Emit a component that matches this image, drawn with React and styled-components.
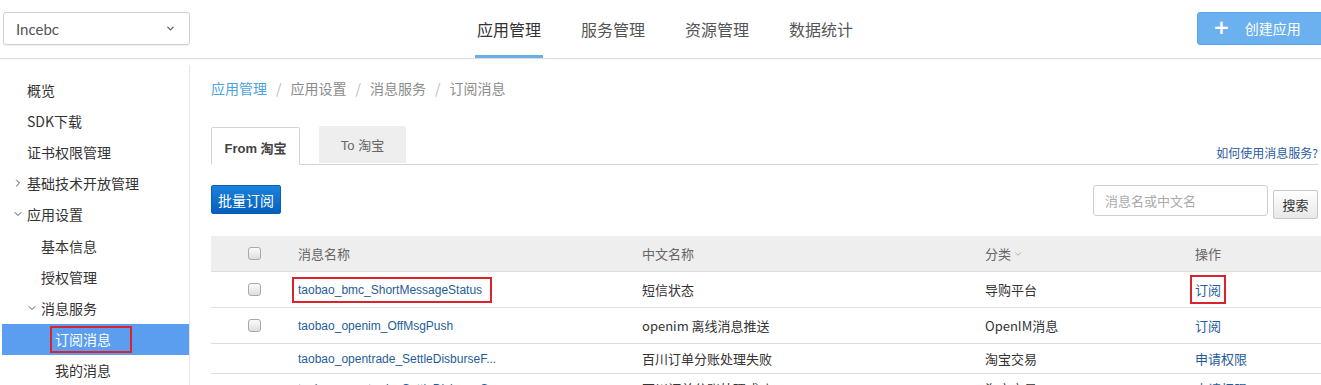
import React from "react";
import styled, { createGlobalStyle } from "styled-components";
import { ChevronDown, ChevronRight } from "lucide-react";

const GlobalStyle = createGlobalStyle`
  html, body {
    margin: 0;
    padding: 0;
    background: #fff;
    overflow: hidden;
  }
  body {
    font-family: "Noto Sans CJK SC", "Liberation Sans", sans-serif;
    color: #333;
  }
`;

const NAV = ["应用管理", "服务管理", "资源管理", "数据统计"];

const MENU = [
  { text: "概览", level: 0 },
  { text: "SDK下载", level: 0 },
  { text: "证书权限管理", level: 0 },
  { text: "基础技术开放管理", level: 0, caret: "right" },
  { text: "应用设置", level: 0, caret: "down" },
  { text: "基本信息", level: 1 },
  { text: "授权管理", level: 1 },
  { text: "消息服务", level: 1, caret: "down" },
  { text: "订阅消息", level: 2, active: true },
  { text: "我的消息", level: 2 },
];

const ROWS = [
  {
    name: "taobao_bmc_ShortMessageStatus",
    cn: "短信状态",
    cat: "导购平台",
    op: "订阅",
    check: true,
    marked: true,
  },
  {
    name: "taobao_openim_OffMsgPush",
    cn: "openim 离线消息推送",
    cat: "OpenIM消息",
    op: "订阅",
    check: true,
  },
  {
    name: "taobao_opentrade_SettleDisburseF...",
    cn: "百川订单分账处理失败",
    cat: "淘宝交易",
    op: "申请权限",
  },
  {
    name: "taobao_opentrade_SettleDisburseS...",
    cn: "百川订单分账处理成功",
    cat: "淘宝交易",
    op: "申请权限",
  },
];

const App = () => {
  return (
    <Page>
      <GlobalStyle />
      <Header>
        <AppSelect>
          <span>Incebc</span>
          <ChevronDown size={11} strokeWidth={2.5} color="#555" />
        </AppSelect>
        <Nav>
          {NAV.map((item, index) => (
            <NavItem key={item} $active={index === 0}>
              {item}
            </NavItem>
          ))}
        </Nav>
        <CreateButton>
          <Plus>+</Plus>
          创建应用
        </CreateButton>
      </Header>
      <Body>
        <Sidebar>
          {MENU.map(item => (
            <MenuItem
              key={item.text}
              $level={item.level}
              $active={item.active}>
              {item.caret && (
                <Caret>
                  {item.caret === "right" ? (
                    <ChevronRight size={12} strokeWidth={2} />
                  ) : (
                    <ChevronDown size={12} strokeWidth={2} />
                  )}
                </Caret>
              )}
              {item.active ? <MarkedMenu>{item.text}</MarkedMenu> : item.text}
            </MenuItem>
          ))}
        </Sidebar>
        <Main>
          <Breadcrumb>
            <CrumbLink>应用管理</CrumbLink>
            <Slash>/</Slash>
            <span>应用设置</span>
            <Slash>/</Slash>
            <span>消息服务</span>
            <Slash>/</Slash>
            <span>订阅消息</span>
          </Breadcrumb>
          <TabBar>
            <Tab $active>From 淘宝</Tab>
            <Tab>To 淘宝</Tab>
            <HelpLink>如何使用消息服务?</HelpLink>
          </TabBar>
          <Toolbar>
            <BatchButton>批量订阅</BatchButton>
            <SearchGroup>
              <SearchInput placeholder="消息名或中文名" />
              <SearchButton>搜索</SearchButton>
            </SearchGroup>
          </Toolbar>
          <Table>
            <HeadRow>
              <CheckCell>
                <Checkbox />
              </CheckCell>
              <Cell>消息名称</Cell>
              <Cell>中文名称</Cell>
              <Cell>
                分类
                <ChevronDown
                  size={10}
                  strokeWidth={1.5}
                  color="#888"
                  style={{ marginLeft: 2 }}
                />
              </Cell>
              <Cell>操作</Cell>
            </HeadRow>
            {ROWS.map(row => (
              <Row key={row.cn} $tall={row.check}>
                <CheckCell>{row.check && <Checkbox />}</CheckCell>
                <Cell>
                  <NameLink $marked={row.marked}>{row.name}</NameLink>
                </Cell>
                <Cell>{row.cn}</Cell>
                <Cell>{row.cat}</Cell>
                <Cell>
                  <OpLink $marked={row.marked}>{row.op}</OpLink>
                </Cell>
              </Row>
            ))}
          </Table>
        </Main>
      </Body>
    </Page>
  );
};

export default App;

const Page = styled.div`
  width: 1321px;
  height: 385px;
  overflow: hidden;
`;

const Header = styled.div`
  height: 58px;
  display: flex;
  align-items: center;
  padding-left: 3px;
  border-bottom: 1px solid #dcdcdc;
  box-shadow: 0 1px 2px rgba(0, 0, 0, 0.04);
  position: relative;
`;

const AppSelect = styled.div`
  width: 187px;
  height: 33px;
  box-sizing: border-box;
  border: 1px solid #d0d0d0;
  border-radius: 3px;
  box-shadow: 0 1px 1px rgba(0, 0, 0, 0.06);
  display: flex;
  align-items: center;
  justify-content: space-between;
  padding: 0 13px 0 12px;
  margin-top: -1px;
  font-family: Lato, "Open Sans", sans-serif;
  font-size: 15px;
  color: #555;
`;

const Nav = styled.div`
  display: flex;
  gap: 36px;
  margin-left: 285px;
  height: 100%;
`;

const NavItem = styled.div`
  height: 100%;
  padding: 0 2px;
  display: flex;
  align-items: center;
  box-sizing: border-box;
  font-size: 16px;
  color: ${({ $active }) => ($active ? "#333" : "#555")};
  border-bottom: 3px solid
    ${({ $active }) => ($active ? "#6aaee6" : "transparent")};
  padding-top: 2px;
  margin-bottom: -1px;
`;

const CreateButton = styled.div`
  margin-left: auto;
  margin-right: -6px;
  margin-top: -2px;
  width: 130px;
  height: 33px;
  box-sizing: border-box;
  background: #6cb1ef;
  border: 1px solid #5ea4e4;
  border-radius: 3px;
  color: #fff;
  font-size: 14px;
  display: flex;
  align-items: center;
  padding-left: 15px;
`;

const Plus = styled.span`
  font-family: "DejaVu Sans", sans-serif;
  font-weight: bold;
  font-size: 20px;
  margin-right: 15px;
  line-height: 1;
  margin-top: -2px;
`;

const Body = styled.div`
  display: flex;
`;

const Sidebar = styled.div`
  width: 190px;
  flex-shrink: 0;
  margin-top: 6px;
  padding: 9px 0 0 2px;
  box-sizing: border-box;
  border-right: 1px solid #e6e6e6;
  height: 330px;
`;

const MenuItem = styled.div`
  height: 31.2px;
  display: flex;
  align-items: center;
  font-size: 14px;
  color: ${({ $active }) => ($active ? "#fff" : "#333")};
  background: ${({ $active }) => ($active ? "#5b9ef0" : "transparent")};
  padding-left: ${({ $level }) => 25 + $level * 14}px;
`;

const Caret = styled.span`
  display: flex;
  align-items: center;
  width: 15px;
  margin-left: -15px;
  color: #555;
`;

const MarkedMenu = styled.span`
  outline: 2px solid #d6252c;
  outline-offset: 0;
  padding: 1px 3px 1px 3px;
  margin-left: -3px;
  line-height: 21px;
  width: 72px;
`;

const Main = styled.div`
  flex: 1;
  padding: 0 3px 0 21px;
  min-width: 0;
`;

const Breadcrumb = styled.div`
  margin-top: 19px;
  height: 20px;
  line-height: 20px;
  font-size: 14px;
  color: #8c8c8c;
  display: flex;
`;

const CrumbLink = styled.span`
  color: #4aa3df;
`;

const Slash = styled.span`
  margin: 0 9px;
  color: #bbb;
`;

const TabBar = styled.div`
  margin-top: 28px;
  height: 38px;
  display: flex;
  align-items: flex-end;
  gap: 19px;
  border-bottom: 1px solid #d4d4d4;
`;

const Tab = styled.div`
  height: ${({ $active }) => ($active ? "38px" : "37px")};
  margin-bottom: ${({ $active }) => ($active ? "-1px" : "1px")};
  box-sizing: border-box;
  width: ${({ $active }) => ($active ? "89px" : "87px")};
  display: flex;
  align-items: center;
  justify-content: center;
  font-family: "Liberation Sans", "Noto Sans CJK SC", sans-serif;
  font-size: 13px;
  font-weight: ${({ $active }) => ($active ? "bold" : "normal")};
  color: ${({ $active }) => ($active ? "#444" : "#666")};
  background: ${({ $active }) => ($active ? "#fff" : "#eeeeee")};
  border: ${({ $active }) => ($active ? "1px solid #d4d4d4" : "none")};
  border-bottom: ${({ $active }) => ($active ? "1px solid #fff" : "none")};
  border-radius: 2px 2px 0 0;
  padding-top: ${({ $active }) => ($active ? "2px" : "0")};
`;

const HelpLink = styled.a`
  margin-left: auto;
  align-self: center;
  margin-top: 14px;
  font-size: 12px;
  color: #2a5d9f;
  font-family: "Noto Sans CJK SC", sans-serif;
`;

const Toolbar = styled.div`
  margin-top: 20px;
  height: 34px;
  display: flex;
  justify-content: space-between;
  align-items: flex-start;
`;

const BatchButton = styled.div`
  width: 70px;
  height: 29px;
  box-sizing: border-box;
  border-radius: 2px;
  background: linear-gradient(#1b82dc, #0560bb);
  border: 1px solid #0a5fb4;
  color: #fff;
  font-size: 14px;
  display: flex;
  align-items: center;
  justify-content: center;
`;

const SearchGroup = styled.div`
  display: flex;
  align-items: flex-start;
  gap: 5px;
`;

const SearchInput = styled.input`
  width: 175px;
  height: 31px;
  box-sizing: border-box;
  border: 1px solid #cfcfcf;
  border-radius: 3px;
  padding: 0 11px;
  font-family: "Noto Sans CJK SC", sans-serif;
  font-size: 13px;
  outline: none;
  &::placeholder {
    color: #aaa;
  }
`;

const SearchButton = styled.div`
  width: 45px;
  height: 29px;
  margin-top: 5px;
  box-sizing: border-box;
  border: 1px solid #c8c8c8;
  border-radius: 2px;
  background: linear-gradient(#ffffff, #e8e8e8);
  font-size: 13px;
  color: #333;
  display: flex;
  align-items: center;
  justify-content: center;
`;

const Table = styled.div`
  margin-top: 17px;
  margin-right: -3px;
`;

const GRID = "76px 344px 343px 210px 1fr";

const HeadRow = styled.div`
  display: grid;
  grid-template-columns: ${GRID};
  height: 36px;
  background: #eeeeee;
  border-bottom: 1px solid #dddddd;
  box-sizing: border-box;
  color: #666;
  font-size: 13px;
`;

const Row = styled.div`
  display: grid;
  grid-template-columns: ${GRID};
  height: ${({ $tall }) => ($tall ? "36px" : "30px")};
  border-bottom: 1px solid #dddddd;
  box-sizing: border-box;
  font-size: 13px;
  color: #333;
`;

const Cell = styled.div`
  display: flex;
  align-items: center;
  padding-left: 11px;
  white-space: nowrap;
  overflow: visible;
`;

const CheckCell = styled.div`
  display: flex;
  align-items: center;
  justify-content: center;
  padding-left: 10px;
`;

const Checkbox = styled.span`
  width: 11px;
  height: 11px;
  border: 1px solid #a8a8a8;
  border-radius: 3px;
  background: linear-gradient(#fbfbfb, #dedede);
`;

const NameLink = styled.a`
  font-family: "Liberation Sans", sans-serif;
  font-size: 12px;
  color: #1f5d9a;
  ${({ $marked }) =>
    $marked &&
    `
    outline: 2px solid #d9242b;
    outline-offset: 4px;
    padding-right: 4px;
  `}
`;

const OpLink = styled.a`
  font-size: 13px;
  color: #1f5d9a;
  ${({ $marked }) =>
    $marked &&
    `
    outline: 2px solid #d9242b;
    outline-offset: 3px;
  `}
`;
